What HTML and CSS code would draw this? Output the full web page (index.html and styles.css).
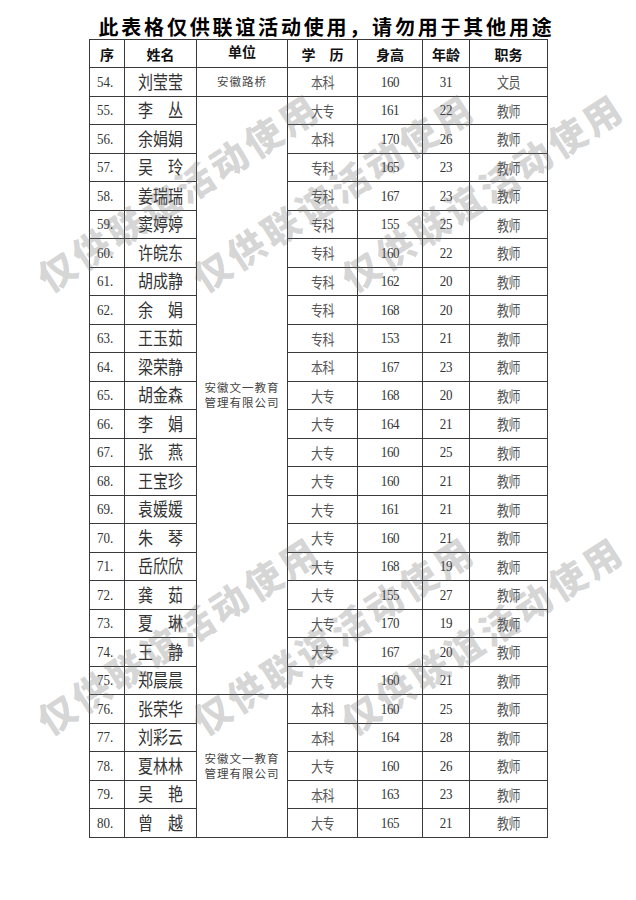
FILE: index.html
```html
<!DOCTYPE html>
<html lang="zh-CN">
<head>
<meta charset="utf-8">
<title>名单</title>
<link rel="stylesheet" href="styles.css">
</head>
<body>
<div class="page">
  <div class="title">此表格仅供联谊活动使用，请勿用于其他用途</div>
  <table class="roster">
    <colgroup>
      <col class="c-seq"><col class="c-name"><col class="c-unit"><col class="c-edu"><col class="c-h"><col class="c-age"><col class="c-job">
    </colgroup>
    <thead>
      <tr><th>序</th><th>姓名</th><th class="th-unit">单位</th><th>学　历</th><th>身高</th><th>年龄</th><th>职务</th></tr>
    </thead>
    <tbody>
      <tr><td class="seq"><span class="t">54.</span></td><td class="name"><span class="t">刘莹莹</span></td><td class="unit">安徽路桥</td><td class="sm"><span class="t">本科</span></td><td class="num"><span class="t">160</span></td><td class="num"><span class="t">31</span></td><td class="sm"><span class="t">文员</span></td></tr>
      <tr><td class="seq"><span class="t">55.</span></td><td class="name"><span class="t">李　丛</span></td><td class="unit" rowspan="21"><span class="ln">安徽文一教育</span><span class="ln">管理有限公司</span></td><td class="sm"><span class="t">大专</span></td><td class="num"><span class="t">161</span></td><td class="num"><span class="t">22</span></td><td class="sm"><span class="t">教师</span></td></tr>
      <tr><td class="seq"><span class="t">56.</span></td><td class="name"><span class="t">余娟娟</span></td><td class="sm"><span class="t">本科</span></td><td class="num"><span class="t">170</span></td><td class="num"><span class="t">26</span></td><td class="sm"><span class="t">教师</span></td></tr>
      <tr><td class="seq"><span class="t">57.</span></td><td class="name"><span class="t">吴　玲</span></td><td class="sm"><span class="t">专科</span></td><td class="num"><span class="t">165</span></td><td class="num"><span class="t">23</span></td><td class="sm"><span class="t">教师</span></td></tr>
      <tr><td class="seq"><span class="t">58.</span></td><td class="name"><span class="t">姜瑞瑞</span></td><td class="sm"><span class="t">专科</span></td><td class="num"><span class="t">167</span></td><td class="num"><span class="t">23</span></td><td class="sm"><span class="t">教师</span></td></tr>
      <tr><td class="seq"><span class="t">59.</span></td><td class="name"><span class="t">窦婷婷</span></td><td class="sm"><span class="t">专科</span></td><td class="num"><span class="t">155</span></td><td class="num"><span class="t">25</span></td><td class="sm"><span class="t">教师</span></td></tr>
      <tr><td class="seq"><span class="t">60.</span></td><td class="name"><span class="t">许皖东</span></td><td class="sm"><span class="t">专科</span></td><td class="num"><span class="t">160</span></td><td class="num"><span class="t">22</span></td><td class="sm"><span class="t">教师</span></td></tr>
      <tr><td class="seq"><span class="t">61.</span></td><td class="name"><span class="t">胡成静</span></td><td class="sm"><span class="t">专科</span></td><td class="num"><span class="t">162</span></td><td class="num"><span class="t">20</span></td><td class="sm"><span class="t">教师</span></td></tr>
      <tr><td class="seq"><span class="t">62.</span></td><td class="name"><span class="t">余　娟</span></td><td class="sm"><span class="t">专科</span></td><td class="num"><span class="t">168</span></td><td class="num"><span class="t">20</span></td><td class="sm"><span class="t">教师</span></td></tr>
      <tr><td class="seq"><span class="t">63.</span></td><td class="name"><span class="t">王玉茹</span></td><td class="sm"><span class="t">专科</span></td><td class="num"><span class="t">153</span></td><td class="num"><span class="t">21</span></td><td class="sm"><span class="t">教师</span></td></tr>
      <tr><td class="seq"><span class="t">64.</span></td><td class="name"><span class="t">梁荣静</span></td><td class="sm"><span class="t">本科</span></td><td class="num"><span class="t">167</span></td><td class="num"><span class="t">23</span></td><td class="sm"><span class="t">教师</span></td></tr>
      <tr><td class="seq"><span class="t">65.</span></td><td class="name"><span class="t">胡金森</span></td><td class="sm"><span class="t">大专</span></td><td class="num"><span class="t">168</span></td><td class="num"><span class="t">20</span></td><td class="sm"><span class="t">教师</span></td></tr>
      <tr><td class="seq"><span class="t">66.</span></td><td class="name"><span class="t">李　娟</span></td><td class="sm"><span class="t">大专</span></td><td class="num"><span class="t">164</span></td><td class="num"><span class="t">21</span></td><td class="sm"><span class="t">教师</span></td></tr>
      <tr><td class="seq"><span class="t">67.</span></td><td class="name"><span class="t">张　燕</span></td><td class="sm"><span class="t">大专</span></td><td class="num"><span class="t">160</span></td><td class="num"><span class="t">25</span></td><td class="sm"><span class="t">教师</span></td></tr>
      <tr><td class="seq"><span class="t">68.</span></td><td class="name"><span class="t">王宝珍</span></td><td class="sm"><span class="t">大专</span></td><td class="num"><span class="t">160</span></td><td class="num"><span class="t">21</span></td><td class="sm"><span class="t">教师</span></td></tr>
      <tr><td class="seq"><span class="t">69.</span></td><td class="name"><span class="t">袁媛媛</span></td><td class="sm"><span class="t">大专</span></td><td class="num"><span class="t">161</span></td><td class="num"><span class="t">21</span></td><td class="sm"><span class="t">教师</span></td></tr>
      <tr><td class="seq"><span class="t">70.</span></td><td class="name"><span class="t">朱　琴</span></td><td class="sm"><span class="t">大专</span></td><td class="num"><span class="t">160</span></td><td class="num"><span class="t">21</span></td><td class="sm"><span class="t">教师</span></td></tr>
      <tr><td class="seq"><span class="t">71.</span></td><td class="name"><span class="t">岳欣欣</span></td><td class="sm"><span class="t">大专</span></td><td class="num"><span class="t">168</span></td><td class="num"><span class="t">19</span></td><td class="sm"><span class="t">教师</span></td></tr>
      <tr><td class="seq"><span class="t">72.</span></td><td class="name"><span class="t">龚　茹</span></td><td class="sm"><span class="t">大专</span></td><td class="num"><span class="t">155</span></td><td class="num"><span class="t">27</span></td><td class="sm"><span class="t">教师</span></td></tr>
      <tr><td class="seq"><span class="t">73.</span></td><td class="name"><span class="t">夏　琳</span></td><td class="sm"><span class="t">大专</span></td><td class="num"><span class="t">170</span></td><td class="num"><span class="t">19</span></td><td class="sm"><span class="t">教师</span></td></tr>
      <tr><td class="seq"><span class="t">74.</span></td><td class="name"><span class="t">王　静</span></td><td class="sm"><span class="t">大专</span></td><td class="num"><span class="t">167</span></td><td class="num"><span class="t">20</span></td><td class="sm"><span class="t">教师</span></td></tr>
      <tr><td class="seq"><span class="t">75.</span></td><td class="name"><span class="t">郑晨晨</span></td><td class="sm"><span class="t">大专</span></td><td class="num"><span class="t">160</span></td><td class="num"><span class="t">21</span></td><td class="sm"><span class="t">教师</span></td></tr>
      <tr><td class="seq"><span class="t">76.</span></td><td class="name"><span class="t">张荣华</span></td><td class="unit" rowspan="5"><span class="ln">安徽文一教育</span><span class="ln">管理有限公司</span></td><td class="sm"><span class="t">本科</span></td><td class="num"><span class="t">160</span></td><td class="num"><span class="t">25</span></td><td class="sm"><span class="t">教师</span></td></tr>
      <tr><td class="seq"><span class="t">77.</span></td><td class="name"><span class="t">刘彩云</span></td><td class="sm"><span class="t">本科</span></td><td class="num"><span class="t">164</span></td><td class="num"><span class="t">28</span></td><td class="sm"><span class="t">教师</span></td></tr>
      <tr><td class="seq"><span class="t">78.</span></td><td class="name"><span class="t">夏林林</span></td><td class="sm"><span class="t">大专</span></td><td class="num"><span class="t">160</span></td><td class="num"><span class="t">26</span></td><td class="sm"><span class="t">教师</span></td></tr>
      <tr><td class="seq"><span class="t">79.</span></td><td class="name"><span class="t">吴　艳</span></td><td class="sm"><span class="t">本科</span></td><td class="num"><span class="t">163</span></td><td class="num"><span class="t">23</span></td><td class="sm"><span class="t">教师</span></td></tr>
      <tr><td class="seq"><span class="t">80.</span></td><td class="name"><span class="t">曾　越</span></td><td class="sm"><span class="t">大专</span></td><td class="num"><span class="t">165</span></td><td class="num"><span class="t">21</span></td><td class="sm"><span class="t">教师</span></td></tr>
    </tbody>
  </table>
  <div class="wm wm1">仅供联谊活动使用</div>
  <div class="wm wm2">仅供联谊活动使用</div>
  <div class="wm wm3">仅供联谊活动使用</div>
  <div class="wm wm4">仅供联谊活动使用</div>
  <div class="wm wm5">仅供联谊活动使用</div>
  <div class="wm wm6">仅供联谊活动使用</div>
</div>
</body>
</html>
```

FILE: styles.css
```css
html, body {
  margin: 0;
  padding: 0;
  background: #ffffff;
}

body {
  font-family: "Noto Sans CJK SC", "Liberation Serif", sans-serif;
  color: #222;
}

.page {
  position: relative;
  width: 636px;
  height: 900px;
  overflow: hidden;
}

.title {
  padding: 15px 0 0 17px;
  height: 24px;
  line-height: 24px;
  text-align: center;
  font-size: 20px;
  font-weight: 700;
  letter-spacing: 2.8px;
  color: #000;
  white-space: nowrap;
}

.roster {
  border-collapse: collapse;
  table-layout: fixed;
  width: 458px;
  margin: 0 0 0 89px;
}

.c-seq { width: 35px; }
.c-name { width: 72px; }
.c-unit { width: 91px; }
.c-edu { width: 70px; }
.c-h { width: 65px; }
.c-age { width: 47px; }
.c-job { width: 78px; }

.roster th,
.roster td {
  border: 1px solid #3a3a3a;
  padding: 0;
  text-align: center;
  vertical-align: middle;
  white-space: nowrap;
}

.roster thead tr {
  height: 28px;
}

.roster tbody tr {
  height: 28.5px;
}

.roster th {
  font-size: 14px;
  font-weight: 700;
  color: #111;
  line-height: 16px;
}

.roster th.th-unit {
  padding-bottom: 5px;
}

.t {
  display: inline-block;
  transform: scaleY(1.2);
}

.seq {
  text-align: left !important;
  padding-left: 7px !important;
  font-family: "Liberation Serif", serif;
  font-size: 13px;
  color: #333;
}

.name {
  font-size: 15px;
  color: #333;
  line-height: 18px;
}

.unit {
  font-size: 11.5px;
  letter-spacing: 1px;
  line-height: 15px;
  color: #444;
}

.ln {
  display: block;
  height: 15px;
  line-height: 15px;
}

.sm {
  font-size: 12px;
  letter-spacing: -0.5px;
  color: #555;
}

.num {
  font-family: "Liberation Serif", serif;
  font-size: 13px;
  letter-spacing: -0.3px;
  color: #333;
}

.wm {
  position: absolute;
  transform: translate(-50%, -50%) rotate(-33deg);
  font-family: "Noto Sans CJK SC", sans-serif;
  font-size: 37px;
  line-height: 40px;
  font-weight: 900;
  letter-spacing: 4px;
  color: rgba(110, 110, 110, 0.3);
  white-space: nowrap;
  pointer-events: none;
}

.wm1 { left: 178px; top: 191px; }
.wm2 { left: 333px; top: 191px; }
.wm3 { left: 482px; top: 191px; }
.wm4 { left: 178px; top: 634px; }
.wm5 { left: 333px; top: 634px; }
.wm6 { left: 482px; top: 634px; }
```
